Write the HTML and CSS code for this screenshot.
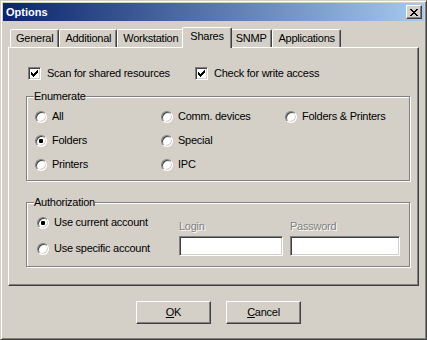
FILE: index.html
```html
<!DOCTYPE html>
<html>
<head>
<meta charset="utf-8">
<title>Options</title>
<link rel="stylesheet" href="styles.css">
</head>
<body>
<div class="window">
  <div class="titlebar">
    <span class="title">Options</span>
    <span class="close-btn"><svg width="8" height="7" viewBox="0 0 8 7" shape-rendering="crispEdges"><path d="M0 0h2v1H0zM6 0h2v1H6zM1 1h2v1H1zM5 1h2v1H5zM2 2h4v1H2zM3 3h2v1H3zM2 4h4v1H2zM1 5h2v1H1zM5 5h2v1H5zM0 6h2v1H0zM6 6h2v1H6z" fill="#000"/></svg></span>
  </div>
  <div class="client">
    <div class="tabs">
      <div class="tab">General</div>
      <div class="tab">Additional</div>
      <div class="tab">Workstation</div>
      <div class="tab active">Shares</div>
      <div class="tab">SNMP</div>
      <div class="tab">Applications</div>
    </div>
    <div class="panel">
      <div class="checks">
        <label class="opt"><span class="checkbox"><svg width="7" height="7" viewBox="0 0 7 7" shape-rendering="crispEdges"><path d="M0 2h1v3H0zM1 3h1v3H1zM2 4h1v3H2zM3 3h1v3H3zM4 2h1v3H4zM5 1h1v3H5zM6 0h1v3H6z" fill="#000"/></svg></span>Scan for shared resources</label>
        <label class="opt"><span class="checkbox"><svg width="7" height="7" viewBox="0 0 7 7" shape-rendering="crispEdges"><path d="M0 2h1v3H0zM1 3h1v3H1zM2 4h1v3H2zM3 3h1v3H3zM4 2h1v3H4zM5 1h1v3H5zM6 0h1v3H6z" fill="#000"/></svg></span>Check for write access</label>
      </div>
      <fieldset class="group enum">
        <legend>Enumerate</legend>
        <div class="radio-grid">
          <label class="opt radio-opt"><span class="radio"></span>All</label>
          <label class="opt radio-opt"><span class="radio"></span>Comm. devices</label>
          <label class="opt radio-opt"><span class="radio"></span>Folders &amp; Printers</label>
          <label class="opt radio-opt"><span class="radio on"></span>Folders</label>
          <label class="opt radio-opt"><span class="radio"></span>Special</label>
          <span></span>
          <label class="opt radio-opt"><span class="radio"></span>Printers</label>
          <label class="opt radio-opt"><span class="radio"></span>IPC</label>
        </div>
      </fieldset>
      <fieldset class="group auth">
        <legend>Authorization</legend>
        <div class="auth-row">
          <div class="auth-radios">
            <label class="opt radio-opt"><span class="radio on"></span>Use current account</label>
            <label class="opt radio-opt"><span class="radio"></span>Use specific account</label>
          </div>
          <div class="field login"><span class="field-label">Login</span><span class="textbox"></span></div>
          <div class="field password"><span class="field-label">Password</span><span class="textbox"></span></div>
        </div>
      </fieldset>
    </div>
    <div class="buttons">
      <button class="btn" type="button"><u>O</u>K</button>
      <button class="btn" type="button"><u>C</u>ancel</button>
    </div>
  </div>
</div>
</body>
</html>
```
FILE: styles.css
```css
* { box-sizing: border-box; }
html, body { margin: 0; padding: 0; }
body {
  width: 427px;
  height: 340px;
  overflow: hidden;
  background: #d4d0c8;
  color: #000;
  font-family: "Liberation Sans", Arial, sans-serif;
  font-size: 11px;
  line-height: 13px;
  letter-spacing: -0.25px;
}
.window {
  width: 427px;
  height: 340px;
  background: #d4d0c8;
  border: 1px solid;
  border-color: #d4d0c8 #404040 #404040 #d4d0c8;
  box-shadow: inset 1px 1px #fff, inset -1px -1px #808080;
  padding: 2px;
  display: flex;
  flex-direction: column;
}
.titlebar {
  flex: none;
  height: 18px;
  margin-bottom: 1px;
  padding: 0 2px 0 3px;
  display: flex;
  align-items: center;
  justify-content: space-between;
  background: linear-gradient(to right, #0a246a, #a6caf0);
}
.title { color: #fff; font-weight: bold; letter-spacing: 0; }
.close-btn {
  width: 16px;
  height: 14px;
  display: flex;
  align-items: center;
  justify-content: center;
  background: #d4d0c8;
  border: 1px solid;
  border-color: #fff #404040 #404040 #fff;
  box-shadow: inset -1px -1px #808080;
}
.close-btn svg { display: block; }
.client {
  flex: 1;
  display: flex;
  flex-direction: column;
  padding: 5px 5px 0;
}
.tabs {
  flex: none;
  height: 20px;
  display: flex;
  align-items: flex-end;
  padding-left: 2px;
}
.tab {
  height: 18px;
  padding: 2px 5px 0;
  border: 1px solid;
  border-bottom: none;
  border-color: #fff #404040 transparent #fff;
  border-radius: 2px 2px 0 0;
  box-shadow: inset -1px 0 #808080;
  white-space: nowrap;
  background: #d4d0c8;
}
.tab.active {
  height: 21px;
  margin: 0 -2px -1px;
  padding: 2px 7px 0;
  position: relative;
  z-index: 1;
}
.panel {
  flex: none;
  height: 239px;
  border: 1px solid;
  border-color: #fff #404040 #404040 #fff;
  box-shadow: inset -1px -1px #808080;
  padding: 0 8px 0 17px;
  display: flex;
  flex-direction: column;
}
.checks {
  display: grid;
  grid-template-columns: 167px auto;
  margin-top: 19px;
  padding-left: 2px;
}
.opt {
  display: flex;
  align-items: center;
  gap: 6px;
  white-space: nowrap;
  height: 13px;
}
.radio-opt { gap: 5px; }
.checkbox {
  flex: none;
  width: 13px;
  height: 13px;
  padding: 2px;
  background: #fff;
  border: 1px solid;
  border-color: #808080 #fff #fff #808080;
  box-shadow: inset 1px 1px #404040, inset -1px -1px #d4d0c8;
  display: flex;
}
.checkbox svg { display: block; }
.radio {
  flex: none;
  width: 12px;
  height: 12px;
  border-radius: 50%;
  background: #fff;
  border: 1px solid;
  border-color: #808080 #fff #fff #808080;
  box-shadow: inset 1px 1px #404040, inset -1px -1px #d4d0c8;
  display: flex;
  align-items: center;
  justify-content: center;
}
.radio.on::after {
  content: "";
  width: 4px;
  height: 4px;
  border-radius: 1px;
  background: #000;
}
.group {
  margin: 0;
  min-width: 0;
  border: 1px solid #808080;
  box-shadow: inset 1px 1px #fff, 1px 1px #fff;
}
.group legend {
  padding: 0;
  margin-left: 7px;
  line-height: 13px;
  background: #d4d0c8;
}
.enum {
  margin-top: 10px;
  padding: 7px 0 9px 0;
}
.radio-grid {
  display: grid;
  grid-template-columns: 126px 124px auto;
  grid-auto-rows: 13px;
  row-gap: 11px;
  padding-left: 8px;
}
.auth {
  margin-top: 15px;
  padding: 7px 0 10px 0;
}
.auth-row {
  display: flex;
  align-items: flex-start;
  padding-left: 10px;
}
.auth-radios {
  width: 142px;
  display: flex;
  flex-direction: column;
  gap: 13px;
}
.field {
  display: flex;
  flex-direction: column;
  margin-top: 4px;
}
.login { width: 104px; margin-right: 7px; }
.password { width: 110px; }
.field-label {
  color: #808080;
  text-shadow: 1px 1px 0 #fff;
  line-height: 13px;
}
.textbox {
  margin-top: 3px;
  height: 20px;
  background: #fff;
  border: 1px solid;
  border-color: #808080 #fff #fff #808080;
  box-shadow: inset 1px 1px #404040, inset -1px -1px #d4d0c8;
}
.buttons {
  display: flex;
  justify-content: center;
  gap: 15px;
  margin-top: 15px;
  padding-left: 10px;
}
.btn {
  width: 75px;
  height: 23px;
  padding: 0;
  margin: 0;
  font: inherit;
  letter-spacing: inherit;
  color: #000;
  background: #d4d0c8;
  border: 1px solid;
  border-color: #fff #404040 #404040 #fff;
  box-shadow: inset -1px -1px #808080;
  border-radius: 0;
}
.btn u { text-decoration: underline; text-underline-offset: 1px; }
```
